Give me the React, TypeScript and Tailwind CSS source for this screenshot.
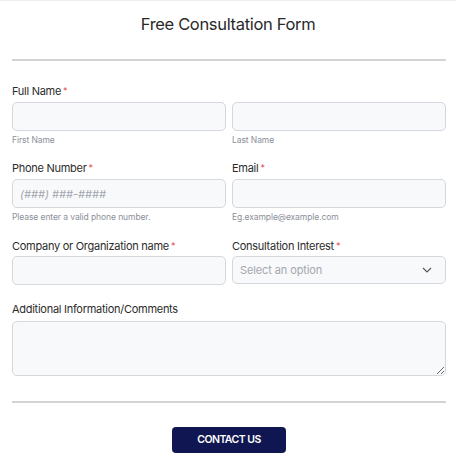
import React from "react";

const font = { fontFamily: "Inter, 'Noto Sans', sans-serif" };

function Label({ text, required }: { text: string; required?: boolean }) {
  return (
    <div className="text-[11px] leading-[14px] text-[#2c2c2c] tracking-[-0.025em] whitespace-nowrap">
      {text}
      {required && <span className="text-[#e5484d] ml-[2px] text-[9px] align-top">*</span>}
    </div>
  );
}

function Hint({ text }: { text: string }) {
  return <div className="text-[8.5px] leading-[12px] text-[#8b9099] mt-[3px] tracking-[-0.01em]">{text}</div>;
}

const inputCls =
  "block w-full h-[29px] rounded-[5px] border border-[#d4d7dd] bg-[#f8f9fb] px-[7px] text-[11px] outline-none placeholder:text-[#a3a7af]";

export default function App() {
  return (
    <div className="w-[456px] h-[467px] bg-white border-t border-[#eeeeee] overflow-hidden" style={font}>
      <div className="pt-[11px] text-center text-[16.5px] leading-[24px] text-[#2a2a2a] tracking-[-0.02em]">
        Free Consultation Form
      </div>
      <div className="ml-[12px] mr-[10px] mt-[23px] h-[2px] bg-[#d3d3d3]" />

      <div className="pl-[12px] pr-[10px]">
        {/* Full name */}
        <div className="mt-[23px]">
          <Label text="Full Name" required />
          <div className="grid grid-cols-2 gap-[6px] mt-[4px]">
            <div>
              <input className={inputCls} />
              <Hint text="First Name" />
            </div>
            <div>
              <input className={inputCls} />
              <Hint text="Last Name" />
            </div>
          </div>
        </div>

        {/* Phone / Email */}
        <div className="grid grid-cols-2 gap-[6px] mt-[15px]">
          <div>
            <Label text="Phone Number" required />
            <input
              className={inputCls + " mt-[4px] placeholder:italic"}
              placeholder="(###) ###-####"
            />
            <Hint text="Please enter a valid phone number." />
          </div>
          <div>
            <Label text="Email" required />
            <input className={inputCls + " mt-[4px]"} />
            <Hint text="Eg.example@example.com" />
          </div>
        </div>

        {/* Company / Interest */}
        <div className="grid grid-cols-2 gap-[6px] mt-[16px]">
          <div>
            <Label text="Company or Organization name" required />
            <input className={inputCls + " mt-[3px]"} />
          </div>
          <div>
            <Label text="Consultation Interest" required />
            <div className="mt-[3px] h-[28px] rounded-[5px] border border-[#d4d7dd] bg-[#f8f9fb] px-[7px] flex items-center justify-between">
              <span className="text-[11px] text-[#a3a7af] tracking-[-0.01em]">Select an option</span>
              <svg width="10" height="6" viewBox="0 0 10 6" className="mr-[6px]">
                <path d="M1 1l4 4 4-4" fill="none" stroke="#555" strokeWidth="1.1" />
              </svg>
            </div>
          </div>
        </div>

        {/* Comments */}
        <div className="mt-[17px]">
          <Label text="Additional Information/Comments" />
          <textarea className="block w-full h-[55px] mt-[5px] rounded-[5px] border border-[#d4d7dd] bg-[#f8f9fb] outline-none resize-y" />
        </div>

        <div className="mt-[25px] h-[2px] bg-[#d3d3d3]" />

        <div className="flex justify-center mt-[24px]">
          <button className="w-[114px] h-[26px] rounded-[4px] bg-[#0f1651] text-white text-[10.5px] font-semibold tracking-[-0.05em]">
            CONTACT US
          </button>
        </div>
      </div>
    </div>
  );
}
